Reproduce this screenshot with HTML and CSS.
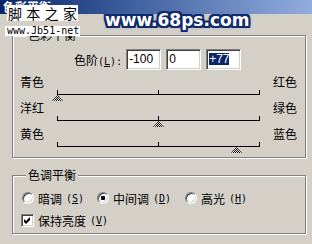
FILE: index.html
```html
<!DOCTYPE html>
<html lang="zh-CN">
<head>
  <meta charset="UTF-8">
  <meta name="viewport" content="width=device-width, initial-scale=1.0">
  <title>色彩平衡</title>
  <link rel="stylesheet" href="styles.css">
</head>
<body>
  <div class="dialog">
    <div class="titlebar">色彩平衡</div>

    <div class="group balance">
      <span class="legend">色彩平衡</span>
      <div class="levels">
        <span class="label">色阶<span class="key">(<u>L</u>):</span></span>
        <span class="field">-100</span>
        <span class="field">0</span>
        <span class="field"><span class="selected">+77</span></span>
      </div>
      <div class="slider">
        <span class="from">青色</span>
        <div class="track"><span class="thumb" style="left: -5px"></span></div>
        <span class="to">红色</span>
      </div>
      <div class="slider">
        <span class="from">洋红</span>
        <div class="track"><span class="thumb" style="left: 96px"></span></div>
        <span class="to">绿色</span>
      </div>
      <div class="slider">
        <span class="from">黄色</span>
        <div class="track"><span class="thumb" style="left: 174px"></span></div>
        <span class="to">蓝色</span>
      </div>
    </div>

    <div class="group tone">
      <span class="legend">色调平衡</span>
      <div class="modes">
        <span class="option"><span class="radio"></span>暗调<span class="key">(<u>S</u>)</span></span>
        <span class="option"><span class="radio checked"></span>中间调<span class="key">(<u>D</u>)</span></span>
        <span class="option"><span class="radio"></span>高光<span class="key">(<u>H</u>)</span></span>
      </div>
      <span class="option keep">
        <span class="checkbox">
          <svg width="7" height="7" viewBox="0 0 7 7"><polygon points="0,2 2,4 6,0 6,3 2,7 0,5" fill="#000"/></svg>
        </span>保持亮度<span class="key">(<u>V</u>)</span>
      </span>
    </div>

    <div class="mark mark-jb">脚本之家</div>
    <div class="mark mark-url">www.Jb51-net</div>
    <div class="mark mark-68">www.68ps.com</div>
  </div>
</body>
</html>
```

FILE: styles.css
```css
* {
  box-sizing: border-box;
}

body {
  margin: 0;
  font-family: "Noto Sans CJK SC", sans-serif;
  font-size: 12px;
  color: #000;
  background: #d4d0c8;
}

.dialog {
  position: relative;
  width: 312px;
  height: 244px;
  overflow: hidden;
  background: #d4d0c8;
}

.titlebar {
  height: 14px;
  padding-left: 3px;
  background: linear-gradient(to right, #0a246a, #3d5d9c 40%, #92acdd);
  color: #fff;
  font-weight: bold;
  line-height: 14px;
}

/* etched group boxes */
.group {
  position: relative;
  width: 294px;
  margin-left: 12px;
  border: 1px solid #808080;
  box-shadow: inset 1px 1px 0 #fff, 1px 1px 0 #fff;
}

.balance {
  margin-top: 21px;
  padding: 13px 0 4px;
}

.tone {
  margin-top: 17px;
  padding: 14px 0 5px;
}

.legend {
  position: absolute;
  top: -8px;
  left: 13px;
  padding: 0 2px;
  line-height: 14px;
  background: #d4d0c8;
}

.key {
  font-family: "DejaVu Sans Mono", monospace;
  font-size: 10px;
}

.levels {
  display: flex;
  align-items: center;
  gap: 5px;
  height: 21px;
  margin-bottom: 5px;
  padding-left: 61px;
}

.levels .label {
  margin-right: -1px;
}

.field {
  width: 35px;
  height: 21px;
  padding-left: 2px;
  background: #fff;
  border: 1px solid;
  border-color: #808080 #fff #fff #808080;
  box-shadow: inset 1px 1px 0 #404040, inset -1px -1px 0 #d4d0c8;
  font-family: "Liberation Sans", sans-serif;
  font-size: 12px;
  line-height: 19px;
}

.selected {
  display: inline-block;
  line-height: 12px;
  background: #0a246a;
  color: #fff;
}

.slider {
  display: grid;
  grid-template-columns: 37px 203px auto;
  height: 26px;
  padding-left: 7px;
  line-height: 14px;
}

.slider .to {
  padding-left: 13px;
}

.track {
  position: relative;
  height: 20px;
  border-bottom: 1px solid #000;
  background:
    linear-gradient(#000, #000) left bottom / 1px 4px no-repeat,
    linear-gradient(#000, #000) center bottom / 1px 4px no-repeat,
    linear-gradient(#000, #000) right bottom / 1px 4px no-repeat;
}

.thumb {
  position: absolute;
  top: 20px;
  width: 11px;
  height: 6px;
  clip-path: polygon(50% 0, 100% 100%, 0 100%);
  background: repeating-conic-gradient(#000 0 25%, #e8e6e0 0 50%) 0 0 / 2px 2px;
}

.modes {
  display: grid;
  grid-template-columns: 75px 88px auto;
  height: 16px;
  margin-bottom: 6px;
  padding-left: 9px;
}

.option {
  display: flex;
  align-items: center;
  gap: 4px;
  height: 16px;
}

.radio {
  width: 12px;
  height: 12px;
  border-radius: 50%;
  background: #fff;
  border: 1px solid;
  border-color: #808080 #fff #fff #808080;
  box-shadow: inset 1px 1px 0 #404040, inset -1px -1px 0 #d4d0c8;
}

.radio.checked {
  background: radial-gradient(circle, #000 0 2px, #fff 2.5px);
}

.keep {
  padding-left: 8px;
}

.checkbox {
  display: flex;
  align-items: center;
  justify-content: center;
  width: 13px;
  height: 13px;
  background: #fff;
  border: 1px solid;
  border-color: #808080 #fff #fff #808080;
  box-shadow: inset 1px 1px 0 #404040, inset -1px -1px 0 #d4d0c8;
}

/* watermarks over the screenshot */
.mark {
  position: absolute;
}

.mark-jb {
  left: 7px;
  top: 5px;
  width: 71px;
  height: 16px;
  padding-left: 1px;
  background: #fff;
  font-size: 14px;
  line-height: 16px;
  letter-spacing: 4.3px;
  white-space: nowrap;
}

.mark-url {
  left: 5px;
  top: 26px;
  width: 75px;
  height: 10px;
  padding-left: 2px;
  background: #fff;
  font-family: "DejaVu Sans Mono", monospace;
  font-size: 10px;
  line-height: 10px;
  white-space: nowrap;
}

.mark-68 {
  left: 105px;
  top: 10px;
  font-family: "DejaVu Sans", sans-serif;
  font-weight: bold;
  font-size: 17px;
  line-height: 20px;
  color: #fff;
  white-space: nowrap;
  text-shadow:
    -2px 0 #112a6c, 2px 0 #112a6c, 0 -2px #112a6c, 0 2px #112a6c,
    -2px -2px #112a6c, 2px 2px #112a6c, -2px 2px #112a6c, 2px -2px #112a6c,
    -1px -1px #112a6c, 1px 1px #112a6c, -1px 1px #112a6c, 1px -1px #112a6c,
    0 0 4px #4d6db0;
}
```
